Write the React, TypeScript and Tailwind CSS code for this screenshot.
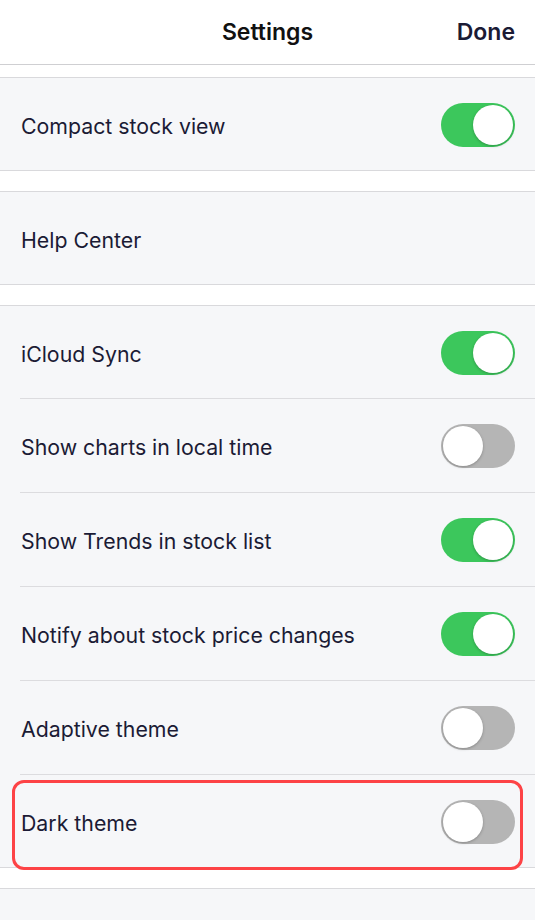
import React from "react";

type Row = { label: string; on?: boolean; marked?: boolean };

const Toggle = ({ on }: { on: boolean }) => (
  <div
    className={`flex h-[44px] w-[74px] items-center rounded-full p-[2px] ${
      on ? "justify-end bg-[#3cc75c]" : "justify-start bg-[#b5b5b5]"
    }`}
  >
    <div className="h-[40px] w-[40px] rounded-full bg-white shadow-[0_1px_3px_rgba(0,0,0,0.25)]" />
  </div>
);

const SettingRow = ({ row, first, last }: { row: Row; first: boolean; last: boolean }) => (
  <div
    className={`relative flex items-center bg-[#f6f7f9] pl-[21px] pr-[20px] ${
      first || last ? "h-[93px]" : "h-[94px]"
    }`}
  >
    <span className="flex-1 pt-[4px] text-[21.3px] text-[#1b1b35]">{row.label}</span>
    {row.on !== undefined && <Toggle on={row.on} />}
    <div className={`absolute bottom-0 right-0 h-px ${last ? "left-0 bg-[#d9d9dc]" : "left-[20px] bg-[#dcdcdf]"}`} />
    {/* highlight */}
    {row.marked && (
      <div className="absolute left-[12px] top-[5px] h-[90px] w-[511px] rounded-[12px] border-[3px] border-[#fd4346]" />
    )}
  </div>
);

const Section = ({ rows }: { rows: Row[] }) => (
  <section className="border-t border-[#d9d9dc]">
    {rows.map((r, i) => (
      <SettingRow key={r.label} row={r} first={i === 0} last={i === rows.length - 1} />
    ))}
  </section>
);

export default function App() {
  return (
    <main className="min-h-[920px] w-[535px] bg-white font-['Inter',sans-serif]">
      {/* header */}
      <header className="relative flex h-[65px] items-center justify-center border-b border-[#cfcfd2] bg-white">
        <h1 className="text-[23px] font-semibold text-[#111]">Settings</h1>
        <button className="absolute right-[20px] text-[23px] font-semibold text-[#1b1b35]">Done</button>
      </header>

      <div className="h-[12px]" />
      <Section rows={[{ label: "Compact stock view", on: true }]} />
      <div className="h-[20px]" />
      <Section rows={[{ label: "Help Center" }]} />
      <div className="h-[20px]" />
      <Section
        rows={[
          { label: "iCloud Sync", on: true },
          { label: "Show charts in local time", on: false },
          { label: "Show Trends in stock list", on: true },
          { label: "Notify about stock price changes", on: true },
          { label: "Adaptive theme", on: false },
          { label: "Dark theme", on: false, marked: true },
        ]}
      />
      <div className="h-[20px]" />
      <div className="h-[32px] border-t border-[#d9d9dc] bg-[#f6f7f9]" />
    </main>
  );
}
